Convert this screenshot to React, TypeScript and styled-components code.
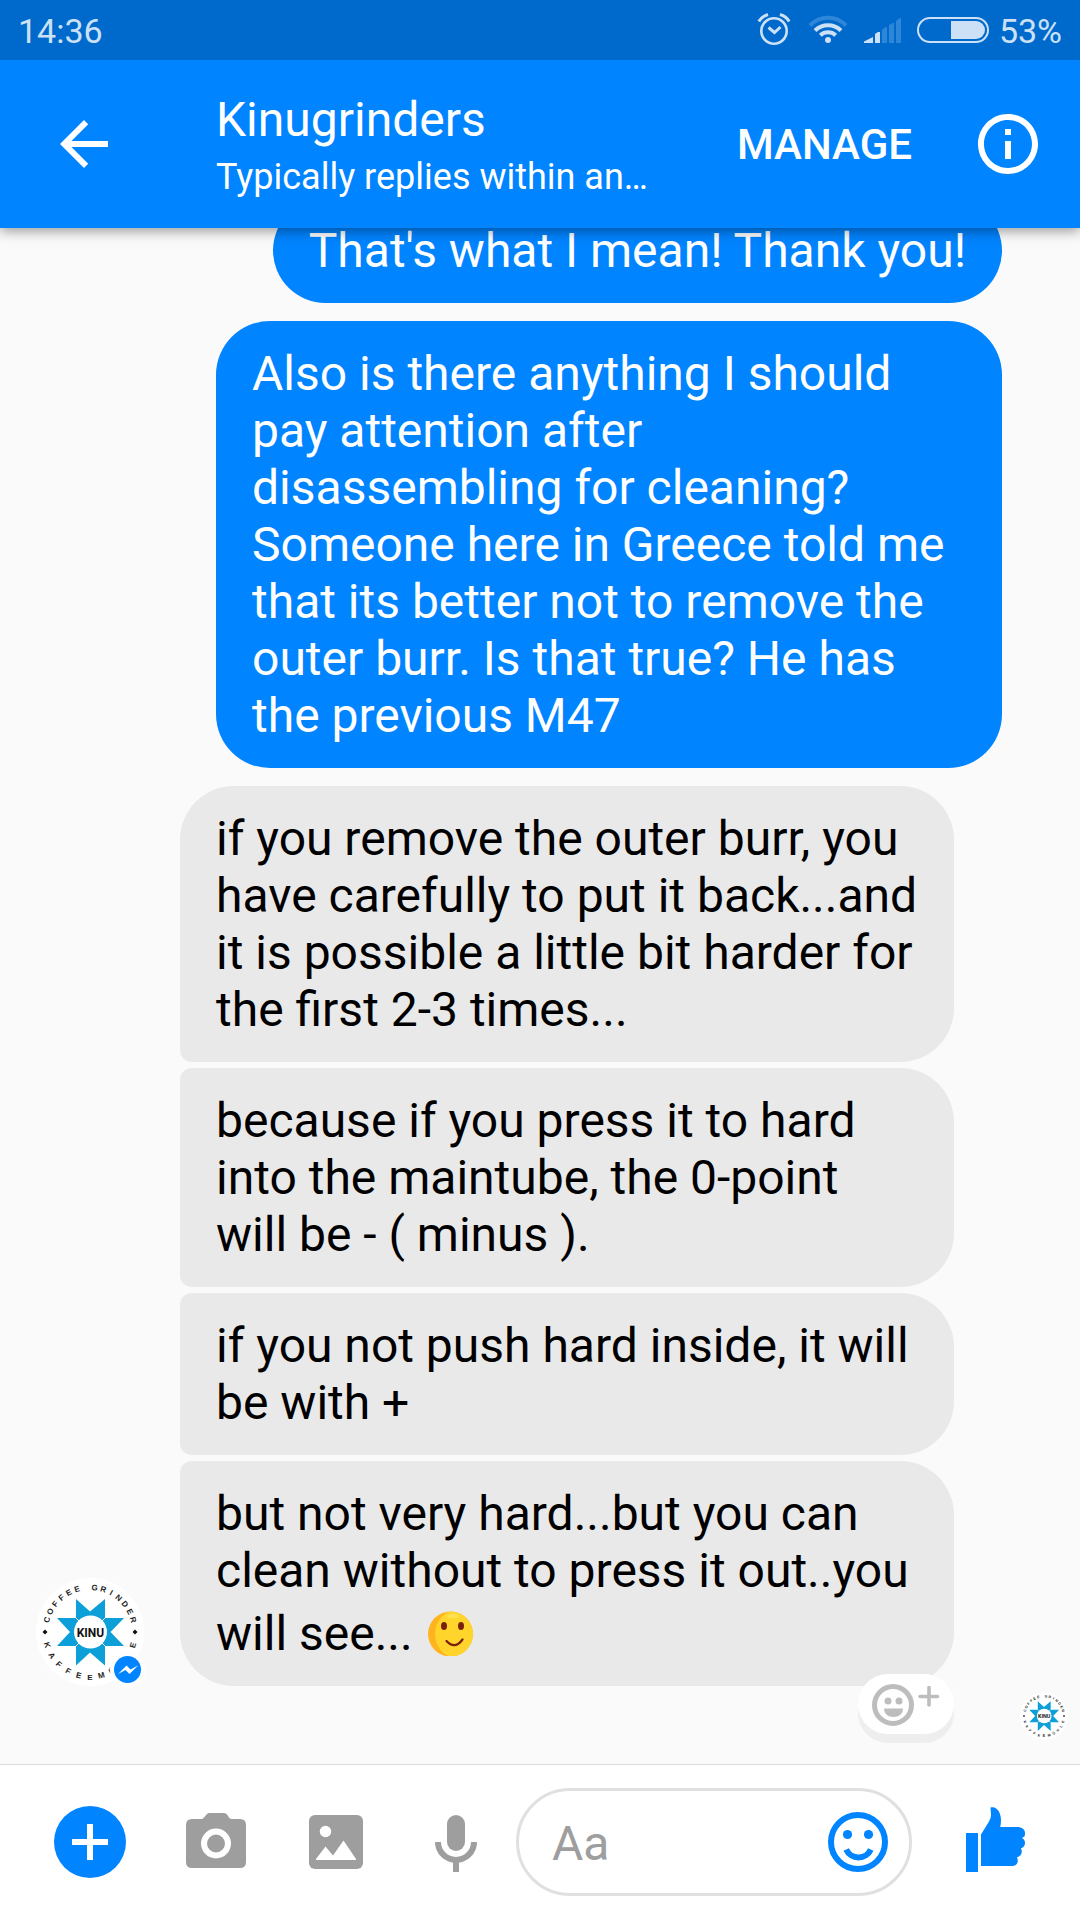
import React from "react";
import styled, { createGlobalStyle, css } from "styled-components";

const BLUE = "#0084ff";
const STATUS = "#cce1f5";
const GREY = "#9e9e9e";

const GlobalStyle = createGlobalStyle`
  * { box-sizing: border-box; }
  body {
    margin: 0;
    background: #fafafa;
    font-family: Roboto, "Noto Sans", sans-serif;
  }
  button, input { font: inherit; }
  svg { display: block; flex: none; }
`;

const Screen = styled.div`
  display: flex;
  flex-direction: column;
  height: 100vh;
  overflow: hidden;
`;

/* ---------- status bar ---------- */

const StatusBar = styled.div`
  display: flex;
  align-items: center;
  justify-content: space-between;
  flex: none;
  height: 60px;
  padding: 0 18px;
  background: #006acc;
  color: ${STATUS};
  font-size: 34px;
  line-height: 40px;
  position: relative;
  z-index: 2;
`;

const StatusText = styled.span`
  padding-top: 2px;
`;

const StatusIcons = styled.div`
  display: flex;
  align-items: center;
  gap: 15px;
`;

const BatteryGroup = styled.div`
  display: flex;
  align-items: center;
  gap: 10px;
`;

/* ---------- header ---------- */

const Header = styled.header`
  display: flex;
  align-items: center;
  flex: none;
  height: 168px;
  padding: 0 36px 0 48px;
  background: ${BLUE};
  color: #fff;
  position: relative;
  z-index: 1;
  box-shadow: 0 3px 12px rgba(0, 0, 0, 0.4);
`;

const IconButton = styled.button<{ $color: string }>`
  display: block;
  flex: none;
  width: 72px;
  height: 72px;
  padding: 0;
  border: 0;
  background: none;
  color: ${(p) => p.$color};
  cursor: pointer;
`;

const TitleBlock = styled.div`
  display: flex;
  flex-direction: column;
  gap: 8px;
  flex: 1;
  min-width: 0;
  margin-left: 96px;
  padding-top: 1px;
`;

const Title = styled.h1`
  margin: 0;
  font-size: 48px;
  line-height: 57px;
  font-weight: 400;
`;

const Subtitle = styled.p`
  margin: 0;
  font-size: 36px;
  line-height: 42px;
  white-space: nowrap;
`;

const ManageButton = styled.button`
  margin-right: 60px;
  padding: 2px 0 0;
  border: 0;
  background: none;
  color: #fff;
  font-size: 42px;
  line-height: 50px;
  font-weight: 500;
  cursor: pointer;
`;

/* ---------- conversation ---------- */

const Conversation = styled.main`
  display: flex;
  flex-direction: column-reverse;
  flex: 1;
  min-height: 0;
  overflow-y: auto;
  scrollbar-width: none;
`;

const Thread = styled.div`
  display: flex;
  flex-direction: column;
  flex: none;
  gap: 18px;
  padding-bottom: 24px;
`;

const Outgoing = styled.div`
  display: flex;
  flex-direction: column;
  align-items: flex-end;
  gap: 18px;
  padding: 0 78px 0 216px;
`;

const Incoming = styled.div`
  display: flex;
  align-items: flex-end;
  gap: 36px;
  padding: 0 126px 0 36px;
`;

const Stack = styled.div`
  display: flex;
  flex-direction: column;
  align-items: flex-start;
  gap: 6px;
  flex: 1;
  position: relative;
`;

const Bubble = styled.p<{ $mine?: boolean }>`
  margin: 0;
  padding: 24px 36px;
  border-radius: 54px;
  font-size: 48px;
  line-height: 57px;
  ${(p) =>
    p.$mine
      ? css`
          background: ${BLUE};
          color: #fff;
        `
      : css`
          background: #e9e9e9;
          color: #000;
          &:not(:first-child) {
            border-top-left-radius: 12px;
          }
          &:not(:last-of-type) {
            border-bottom-left-radius: 12px;
          }
        `}
`;

const InlineEmoji = styled.svg`
  display: inline-block;
  vertical-align: -6px;
`;

const AvatarBox = styled.div`
  flex: none;
  position: relative;
`;

const MessengerBadge = styled.svg`
  position: absolute;
  right: -2px;
  bottom: -2px;
`;

const ReactButton = styled.button`
  position: absolute;
  right: 0;
  bottom: -48px;
  width: 96px;
  height: 60px;
  padding: 0;
  border: 0;
  border-radius: 30px;
  background: #fff;
  box-shadow: 0 9px 0 #eeeeee;
  cursor: pointer;
`;

const ReadReceipt = styled.div`
  display: flex;
  justify-content: flex-end;
  margin-top: -12px;
  padding-right: 12px;
`;

/* ---------- composer ---------- */

const Composer = styled.form`
  display: flex;
  align-items: center;
  flex: none;
  height: 156px;
  padding: 0 48px 0 54px;
  background: #fff;
  box-shadow: inset 0 1px 0 #dcdcdc;
`;

const Tools = styled.div`
  display: flex;
  gap: 48px;
  margin: 0 24px 0 54px;
`;

const Field = styled.div`
  display: flex;
  align-items: center;
  flex: 1;
  min-width: 0;
  height: 108px;
  margin-right: 48px;
  padding: 0 15px 0 33px;
  border: 3px solid #e0e0e0;
  border-radius: 54px;
`;

const TextInput = styled.input`
  flex: 1;
  min-width: 0;
  padding: 2px 0 0;
  border: 0;
  outline: 0;
  background: none;
  color: #000;
  font-size: 48px;
  line-height: 57px;
  &::placeholder {
    color: ${GREY};
    opacity: 1;
  }
`;

/* ---------- brand avatar ---------- */

function ring(text: string, start: number, step: number, radius: number, bottom = false) {
  return text.split("").map((ch, i) => {
    const a = start + i * step;
    return (
      <text
        key={i}
        x="54"
        y={bottom ? 54 + radius : 54 - radius}
        textAnchor="middle"
        transform={`rotate(${a} 54 54)`}
      >
        {ch}
      </text>
    );
  });
}

function KinuAvatar({ size }: { size: number }) {
  return (
    <svg width={size} height={size} viewBox="0 0 108 108" role="img" aria-label="Kinugrinders">
      <circle cx="54" cy="54" r="54" fill="#fff" />
      <path
        fill="#0c9fd8"
        d="M40 21L54 33.500L69 21V40H88L74.500 54L88 68H69V87.500L54 74.500L40 87.500V68H21L34 54L21 40H40Z"
      />
      <path
        stroke="#fff"
        strokeWidth="1"
        d="M38 38L44 44M71 38L65 44M38 70L44 64M71 70L65 64"
      />
      <circle cx="54.500" cy="54" r="16.500" fill="#fff" />
      <text
        x="54.500"
        y="58.500"
        textAnchor="middle"
        fontFamily='Roboto, sans-serif'
        fontWeight="700"
        fontSize="12"
        fill="#111"
      >
        KINU
      </text>
      <g fill="#222" fontFamily='"Liberation Sans", sans-serif' fontWeight="700" fontSize="8">
        {ring("COFFEE GRINDER", -74, 11.4, 42)}
        {ring("KAFFEEMÜHLE", 73, -14.6, 47.5, true)}
      </g>
      <path fill="#111" d="M9 51.500L11.500 54L9 56.500L6.500 54ZM99 51.500L101.500 54L99 56.500L96.500 54Z" />
    </svg>
  );
}

/* ---------- page ---------- */

const received = [
  "if you remove the outer burr, you have carefully to put it back...and it is possible a little bit harder for the first 2-3 times...",
  "because if you press it to hard into the maintube, the 0-point will be - ( minus ).",
  "if you not push hard inside, it will be with +",
];

export default function App() {
  return (
    <Screen>
      <GlobalStyle />
      <StatusBar>
        <StatusText>14:36</StatusText>
        <StatusIcons>
          <svg width="36" height="60" viewBox="0 0 36 60" fill="none" stroke={STATUS} strokeWidth="2.600">
            <circle cx="18" cy="31" r="12.700" />
            <path d="M12.500 27.500L18.500 32.500L24.500 27" strokeWidth="3" />
            <path d="M2.800 21.500Q5.500 16.500 12 14.500M33.200 21.500Q30.500 16.500 24 14.500" strokeWidth="3" />
          </svg>
          <svg width="42" height="60" viewBox="0 0 42 60" fill="none" stroke={STATUS} strokeWidth="4">
            <circle cx="21" cy="40" r="3" fill={STATUS} stroke="none" />
            <path d="M13.300 35.300A11.500 11.500 0 0 1 28.700 35.300" />
            <path d="M8 30.500A18.500 18.500 0 0 1 34 30.500" />
            <path d="M3 25.500A25 25 0 0 1 39 25.500" stroke="#2e86d8" />
          </svg>
          <svg width="38" height="60" viewBox="0 0 38 60">
            <path fill={STATUS} d="M0 43V41.500L9 37V43ZM11 43V34L14 32H16V43Z" />
            <path fill="#2e86d8" d="M18 43V29.500L22 27H23V43ZM25 43V25L29 23H30V43ZM32 43V21L36 18H37V43Z" />
          </svg>
          <BatteryGroup>
            <svg width="72" height="60" viewBox="0 0 72 60">
              <rect x="1" y="18" width="70" height="24" rx="12" fill="none" stroke={STATUS} strokeWidth="2" />
              <path fill={STATUS} d="M34 21H59A9 9 0 0 1 59 39H34Z" />
            </svg>
            <StatusText>53%</StatusText>
          </BatteryGroup>
        </StatusIcons>
      </StatusBar>

      <Header>
        <IconButton $color="#fff" type="button" aria-label="Back">
          <svg width="72" height="72" viewBox="0 0 24 24" fill="currentColor">
            <path d="M20 11H7.830l5.590-5.590L12 4l-8 8 8 8 1.410-1.410L7.830 13H20v-2z" />
          </svg>
        </IconButton>
        <TitleBlock>
          <Title>Kinugrinders</Title>
          <Subtitle>Typically replies within an…</Subtitle>
        </TitleBlock>
        <ManageButton type="button">MANAGE</ManageButton>
        <IconButton $color="#fff" type="button" aria-label="Conversation info">
          <svg width="72" height="72" viewBox="0 0 24 24" fill="currentColor">
            <path d="M11 17h2v-6h-2v6zm1-15C6.480 2 2 6.480 2 12s4.480 10 10 10 10-4.480 10-10S17.520 2 12 2zm0 18c-4.410 0-8-3.590-8-8s3.590-8 8-8 8 3.590 8 8-3.590 8-8 8zM11 9h2V7h-2v2z" />
          </svg>
        </IconButton>
      </Header>

      <Conversation>
        <Thread>
          <Outgoing>
            <Bubble $mine>That's what I mean! Thank you!</Bubble>
            <Bubble $mine>
              Also is there anything I should pay attention after
              <br />
              disassembling for cleaning? Someone here in Greece told me that its better not to remove the
              outer burr. Is that true? He has the previous M47
            </Bubble>
          </Outgoing>
          <Incoming>
            <AvatarBox>
              <KinuAvatar size={108} />
              <MessengerBadge width="36" height="36" viewBox="0 0 36 36" aria-hidden="true">
                <circle cx="18" cy="18" r="18" fill="#fdfdfd" />
                <circle cx="17.500" cy="17.500" r="13.500" fill={BLUE} />
                <path fill="#fff" d="M8 22L16.500 13.500L20.500 17.500L28 13.500L19.500 22L15.500 18Z" />
              </MessengerBadge>
            </AvatarBox>
            <Stack>
              {received.map((text) => (
                <Bubble key={text}>{text}</Bubble>
              ))}
              <Bubble>
                but not very hard...but you can clean without to press it out..you will see...{" "}
                <InlineEmoji width="48" height="57" viewBox="-2 0 48 57" role="img" aria-label="slightly smiling face">
                  <defs>
                    <clipPath id="face">
                      <circle cx="23.500" cy="35" r="22.500" />
                    </clipPath>
                  </defs>
                  <circle cx="23.500" cy="35" r="22.500" fill="#ffb31f" />
                  <ellipse cx="30" cy="35" rx="22" ry="24" fill="#ffd52b" clipPath="url(#face)" />
                  <ellipse cx="26" cy="17" rx="6" ry="2.500" fill="#ffe14d" />
                  <ellipse cx="17" cy="27" rx="3" ry="4" fill="#7a1f0c" />
                  <ellipse cx="34" cy="27" rx="3" ry="4" fill="#7a1f0c" />
                  <path d="M19.500 42Q28 51 35.500 40.500" fill="none" stroke="#7a1f0c" strokeWidth="2.200" strokeLinecap="round" />
                </InlineEmoji>
              </Bubble>
              <ReactButton type="button" aria-label="Add reaction">
                <svg width="96" height="60" viewBox="0 0 96 60" fill="#bdbdbd">
                  <circle cx="35" cy="31" r="18.500" fill="none" stroke="#bdbdbd" strokeWidth="5" />
                  <circle cx="30" cy="27" r="3.500" />
                  <circle cx="41" cy="27" r="3.500" />
                  <path d="M26 34.500H45C45 39.500 41 43 35.500 43S26 39.500 26 34.500Z" />
                  <path d="M71 13.500V31M62 22.500H79.500" stroke="#bdbdbd" strokeWidth="3.600" strokeLinecap="round" />
                </svg>
              </ReactButton>
            </Stack>
          </Incoming>
          <ReadReceipt>
            <KinuAvatar size={48} />
          </ReadReceipt>
        </Thread>
      </Conversation>

      <Composer onSubmit={(e) => e.preventDefault()}>
        <IconButton $color={BLUE} type="button" aria-label="More options">
          <svg width="72" height="72" viewBox="0 0 72 72">
            <circle cx="36" cy="36" r="36" fill="currentColor" />
            <path d="M36 18V54M18 36H54" stroke="#fff" strokeWidth="6" />
          </svg>
        </IconButton>
        <Tools>
          <IconButton $color={GREY} type="button" aria-label="Camera">
            <svg width="72" height="72" viewBox="0 0 72 72">
              <path
                fill="currentColor"
                d="M12 13H21Q23 13 24 11.500L26.500 8.500Q27.500 7 29 7H44Q46 7 47 8.500L49 11.500Q50 13 52 13H60Q66 13 66 19V56Q66 62 60 62H12Q6 62 6 56V19Q6 13 12 13Z"
              />
              <circle cx="36" cy="37.500" r="12" fill="none" stroke="#fff" strokeWidth="6" />
            </svg>
          </IconButton>
          <IconButton $color={GREY} type="button" aria-label="Gallery">
            <svg width="72" height="72" viewBox="0 0 72 72">
              <rect x="9" y="9" width="54" height="54" rx="6" fill="currentColor" />
              <circle cx="25.500" cy="25.500" r="5.700" fill="#fff" />
              <path fill="#fff" d="M16 54V53L25.500 40.500L33 49.500L43.500 34.500L56 53V54Z" />
            </svg>
          </IconButton>
          <IconButton $color={GREY} type="button" aria-label="Voice message">
            <svg width="72" height="72" viewBox="0 0 72 72">
              <rect x="27" y="9" width="18" height="36" rx="9" fill="currentColor" />
              <path d="M18 36A18 18 0 0 0 54 36M36 54V66" fill="none" stroke="currentColor" strokeWidth="6" />
            </svg>
          </IconButton>
        </Tools>
        <Field>
          <TextInput type="text" placeholder="Aa" aria-label="Message" />
          <IconButton $color={BLUE} type="button" aria-label="Emoji">
            <svg width="72" height="72" viewBox="0 0 72 72">
              <circle cx="36" cy="36" r="27" fill="none" stroke="currentColor" strokeWidth="6" />
              <circle cx="25.500" cy="28.500" r="4.600" fill="currentColor" />
              <circle cx="46.500" cy="28.500" r="4.600" fill="currentColor" />
              <path d="M24.200 43.500A13.500 13.500 0 0 0 48.800 43.500" fill="none" stroke="currentColor" strokeWidth="6" />
            </svg>
          </IconButton>
        </Field>
        <IconButton $color={BLUE} type="button" aria-label="Send like">
          <svg width="72" height="72" viewBox="0 0 72 72" fill="currentColor">
            <path d="M6 27H18V66H6Z" />
            <path d="M30.500 1.500C37 -0.500 41 7 41 14Q41 18 40.200 21H57C62 21 65 23.500 65 27Q65 29.500 64.500 30.500Q63 31 62 32Q65 33.500 65 37Q65 41 61 42.300C63 46.500 61 50.500 57 51.300C59 56 57 60 52 60H21V28.500L29 15.500Q31 12.500 31 9Z" />
          </svg>
        </IconButton>
      </Composer>
    </Screen>
  );
}
